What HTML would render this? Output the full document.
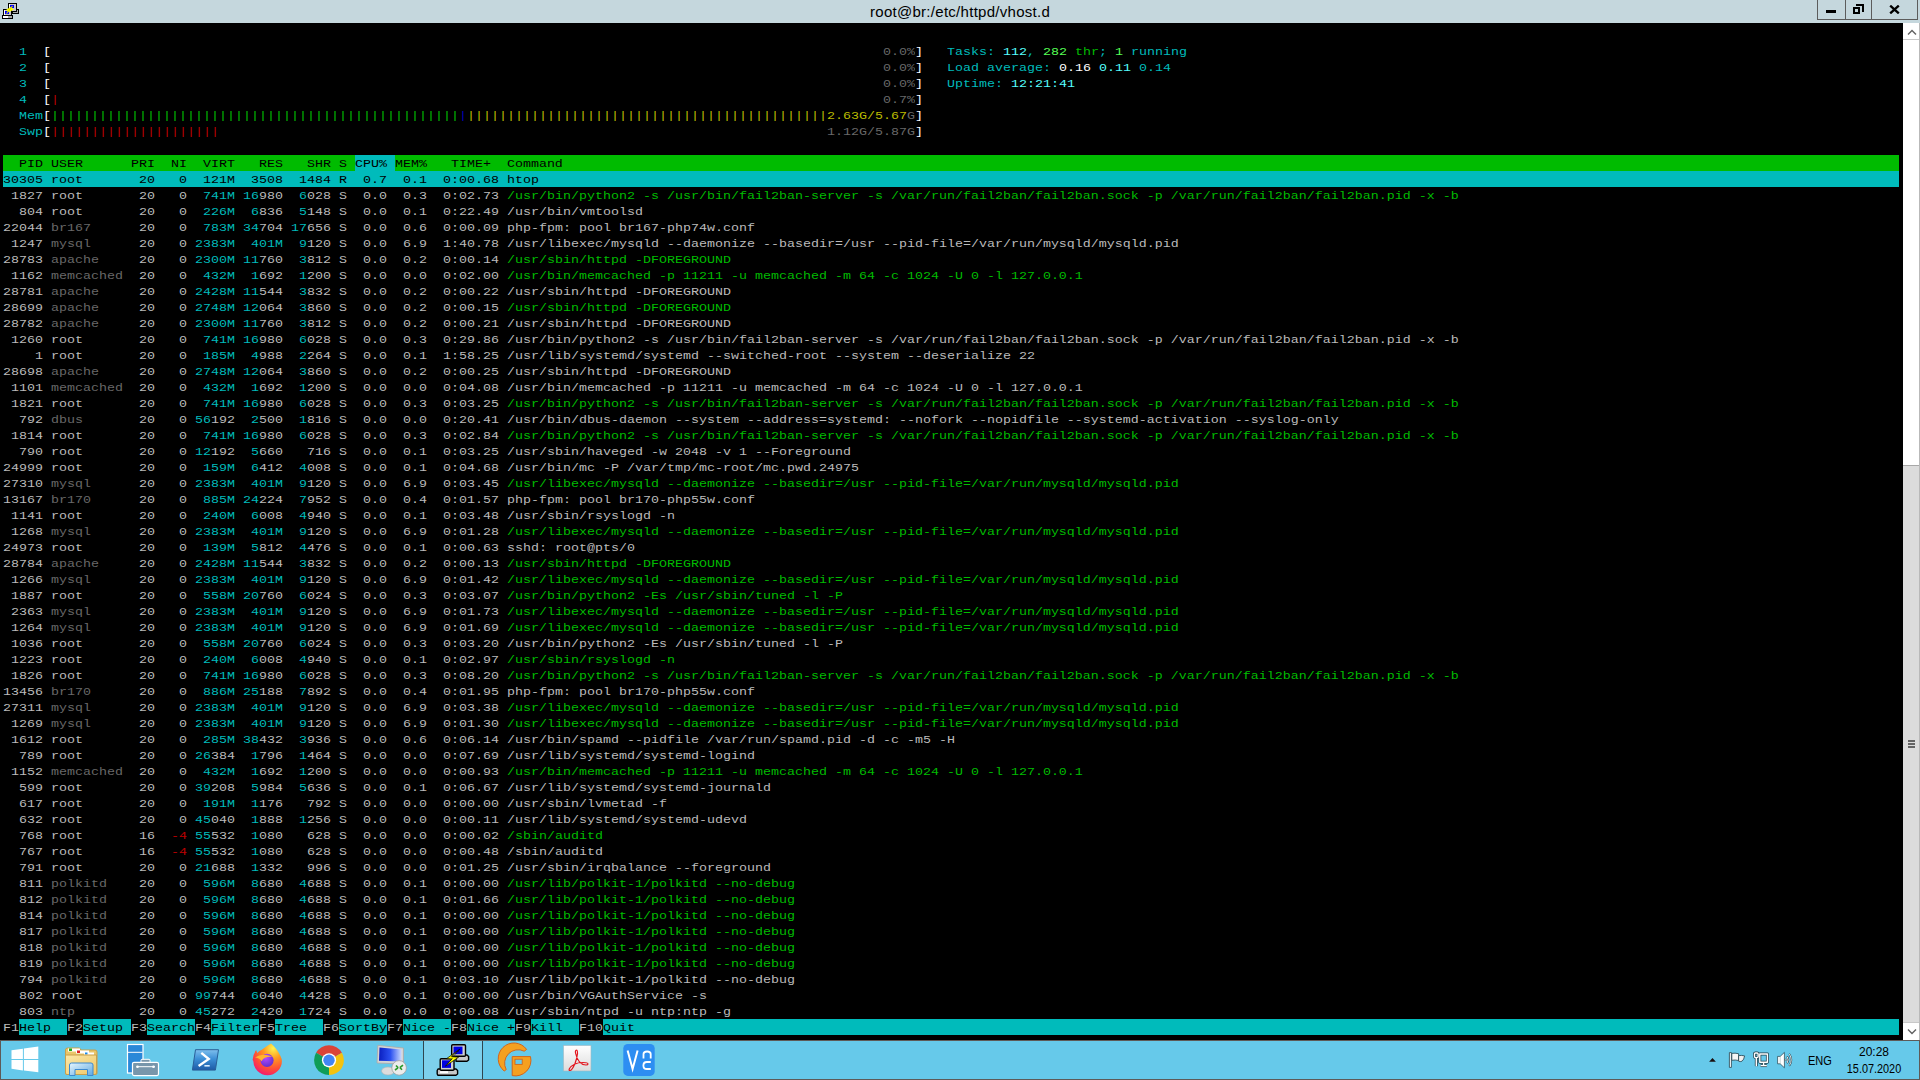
<!DOCTYPE html>
<html><head><meta charset="utf-8">
<style>
html,body{margin:0;padding:0;width:1920px;height:1080px;overflow:hidden;background:#000;}
body{position:relative;font-family:"Liberation Sans",sans-serif;}
#title{position:absolute;left:0;top:0;width:1920px;height:23px;background:#c5d7dd;}
#title .t{position:absolute;left:870px;top:3px;font-size:15px;color:#000;white-space:pre;letter-spacing:0.28px;}
.wb{position:absolute;top:0;height:19px;border:1px solid #5c5c5c;border-top:none;box-sizing:content-box;background:#c5d7dd;}
#term{position:absolute;left:0;top:23px;width:1903px;height:1017px;background:#000;}
.bg{position:absolute;height:16px;}
.row{position:absolute;left:0;height:16px;width:1903px;font-family:"Liberation Mono",monospace;font-size:13.333px;line-height:16px;white-space:pre;}
.row span{position:absolute;top:1px;transform:scaleY(0.88);transform-origin:0 11px;}
#sb{position:absolute;left:1903px;top:23px;width:16px;height:1017px;background:#fff;border-right:1px solid #b9b9b9;}
#taskbar{position:absolute;left:0;top:1040px;width:1918px;height:38px;background:#66c9ea;border:1px solid #5e5a57;}
.ico{position:absolute;}
</style></head><body>
<div id="title">
  <svg class="ico" style="left:0;top:0" width="24" height="23" viewBox="0 0 24 23" shape-rendering="crispEdges">
    <rect x="12" y="9" width="6" height="4" fill="#a8a8a8" stroke="#000" stroke-width="1"/>
    <rect x="8.5" y="3.5" width="8" height="8" fill="#c8c8c8" stroke="#000" stroke-width="1"/>
    <rect x="9" y="4" width="1" height="7" fill="#fff"/>
    <rect x="10" y="5" width="4" height="3" fill="#0000ff"/>
    <rect x="2.5" y="15.5" width="10" height="3" fill="#a8a8a8" stroke="#000" stroke-width="1"/>
    <rect x="3" y="16" width="5" height="2" fill="#fff"/>
    <rect x="3.5" y="9.5" width="8" height="6" fill="#c8c8c8" stroke="#000" stroke-width="1"/>
    <rect x="4" y="10" width="1" height="5" fill="#fff"/>
    <rect x="5" y="11" width="4" height="3" fill="#0000ff"/>
    <polygon points="6,10 9,8 11,7 13,9 14,9.5 11,11 9,12 7,11" fill="#ffff00" shape-rendering="auto"/>
    <path d="M12.5 6 L6.5 13.5" stroke="#e0e000" stroke-width="1.2" shape-rendering="auto"/>
  </svg>
  <div class="t">root@br:/etc/httpd/vhost.d</div>
  <div style="position:absolute;left:1817px;top:0;width:99px;height:19px;border:1px solid #5c5c5c;border-top:none;"></div>
  <div style="position:absolute;left:1845px;top:0;width:1px;height:19px;background:#5c5c5c"></div>
  <div style="position:absolute;left:1871px;top:0;width:1px;height:19px;background:#5c5c5c"></div>
  <div style="position:absolute;left:1826px;top:10px;width:10px;height:3px;background:#000"></div>
  <div style="position:absolute;left:1853px;top:7px;width:3px;height:3px;border:2px solid #000"></div>
  <div style="position:absolute;left:1856px;top:4px;width:6px;height:6px;border-top:2px solid #000;border-right:2px solid #000"></div>
  <svg style="position:absolute;left:1889px;top:5px" width="11" height="9" viewBox="0 0 11 9"><path d="M1.2 0.6 L9.8 8.4 M9.8 0.6 L1.2 8.4" stroke="#000" stroke-width="2.3"/></svg>
</div>
<div id="term">
</div>
<div id="rows" style="position:absolute;left:0;top:0;">
<div class="bg" style="top:155px;left:3px;width:352px;background:#00bb00"></div>
<div class="bg" style="top:155px;left:355px;width:40px;background:#00bbbb"></div>
<div class="bg" style="top:155px;left:395px;width:1504px;background:#00bb00"></div>
<div class="bg" style="top:171px;left:3px;width:1896px;background:#00bbbb"></div>
<div class="bg" style="top:1019px;left:19px;width:48px;background:#00bbbb"></div>
<div class="bg" style="top:1019px;left:83px;width:48px;background:#00bbbb"></div>
<div class="bg" style="top:1019px;left:147px;width:48px;background:#00bbbb"></div>
<div class="bg" style="top:1019px;left:211px;width:48px;background:#00bbbb"></div>
<div class="bg" style="top:1019px;left:275px;width:48px;background:#00bbbb"></div>
<div class="bg" style="top:1019px;left:339px;width:48px;background:#00bbbb"></div>
<div class="bg" style="top:1019px;left:403px;width:48px;background:#00bbbb"></div>
<div class="bg" style="top:1019px;left:467px;width:48px;background:#00bbbb"></div>
<div class="bg" style="top:1019px;left:531px;width:48px;background:#00bbbb"></div>
<div class="bg" style="top:1019px;left:603px;width:1296px;background:#00bbbb"></div>
<div class="row" style="top:43px"><span style="left:19px;color:#00bbbb">1</span><span style="left:43px;color:#ffffff">[</span><span style="left:883px;color:#686868">0.0%</span><span style="left:915px;color:#ffffff">]</span><span style="left:947px;color:#00bbbb">Tasks: </span><span style="left:1003px;color:#55ffff">112</span><span style="left:1027px;color:#00bbbb">, </span><span style="left:1043px;color:#55ff55">282</span><span style="left:1067px;color:#00bb00"> thr</span><span style="left:1099px;color:#00bbbb">; </span><span style="left:1115px;color:#55ff55">1</span><span style="left:1123px;color:#00bbbb"> running</span></div>
<div class="row" style="top:59px"><span style="left:19px;color:#00bbbb">2</span><span style="left:43px;color:#ffffff">[</span><span style="left:883px;color:#686868">0.0%</span><span style="left:915px;color:#ffffff">]</span><span style="left:947px;color:#00bbbb">Load average: </span><span style="left:1059px;color:#ffffff">0.16 </span><span style="left:1099px;color:#55ffff">0.11 </span><span style="left:1139px;color:#00bbbb">0.14</span></div>
<div class="row" style="top:75px"><span style="left:19px;color:#00bbbb">3</span><span style="left:43px;color:#ffffff">[</span><span style="left:883px;color:#686868">0.0%</span><span style="left:915px;color:#ffffff">]</span><span style="left:947px;color:#00bbbb">Uptime: </span><span style="left:1011px;color:#55ffff">12:21:41</span></div>
<div class="row" style="top:91px"><span style="left:19px;color:#00bbbb">4</span><span style="left:43px;color:#ffffff">[</span><span style="left:51px;color:#bb0000">|</span><span style="left:883px;color:#686868">0.7%</span><span style="left:915px;color:#ffffff">]</span></div>
<div class="row" style="top:107px"><span style="left:19px;color:#00bbbb">Mem</span><span style="left:43px;color:#ffffff">[</span><span style="left:51px;color:#00bb00">|||||||||||||||||||||||||||||||||||||||||||||||||||</span><span style="left:459px;color:#0000bb">|</span><span style="left:467px;color:#bbbb00">|||||||||||||||||||||||||||||||||||||||||||||</span><span style="left:827px;color:#bbbb00">2.63G/5.67</span><span style="left:907px;color:#686868">G</span><span style="left:915px;color:#ffffff">]</span></div>
<div class="row" style="top:123px"><span style="left:19px;color:#00bbbb">Swp</span><span style="left:43px;color:#ffffff">[</span><span style="left:51px;color:#bb0000">|||||||||||||||||||||</span><span style="left:827px;color:#686868">1.12G/5.87G</span><span style="left:915px;color:#ffffff">]</span></div>
<div class="row" style="top:155px"><span style="left:3px;color:#000000">  PID USER      PRI  NI  VIRT   RES   SHR S CPU% MEM%   TIME+  Command</span></div>
<div class="row" style="top:171px"><span style="left:3px;color:#000000">30305 </span><span style="left:51px;color:#000000">root      </span><span style="left:131px;color:#000000"> 20 </span><span style="left:163px;color:#000000">  0 </span><span style="left:195px;color:#000000"> 121M </span><span style="left:243px;color:#000000"> 3</span><span style="left:259px;color:#000000">508 </span><span style="left:291px;color:#000000"> 1</span><span style="left:307px;color:#000000">484 </span><span style="left:339px;color:#000000">R </span><span style="left:355px;color:#000000"> 0.7 </span><span style="left:395px;color:#000000"> 0.1 </span><span style="left:435px;color:#000000"> 0:00.68 </span><span style="left:507px;color:#000000">htop</span></div>
<div class="row" style="top:187px"><span style="left:3px;color:#bbbbbb"> 1827 </span><span style="left:51px;color:#bbbbbb">root      </span><span style="left:131px;color:#bbbbbb"> 20 </span><span style="left:163px;color:#bbbbbb">  0 </span><span style="left:195px;color:#00bbbb"> 741M </span><span style="left:243px;color:#00bbbb">16</span><span style="left:259px;color:#bbbbbb">980 </span><span style="left:291px;color:#00bbbb"> 6</span><span style="left:307px;color:#bbbbbb">028 </span><span style="left:339px;color:#bbbbbb">S </span><span style="left:355px;color:#bbbbbb"> 0.0 </span><span style="left:395px;color:#bbbbbb"> 0.3 </span><span style="left:435px;color:#bbbbbb"> 0:02.73 </span><span style="left:507px;color:#00bb00">/usr/bin/python2 -s /usr/bin/fail2ban-server -s /var/run/fail2ban/fail2ban.sock -p /var/run/fail2ban/fail2ban.pid -x -b</span></div>
<div class="row" style="top:203px"><span style="left:3px;color:#bbbbbb">  804 </span><span style="left:51px;color:#bbbbbb">root      </span><span style="left:131px;color:#bbbbbb"> 20 </span><span style="left:163px;color:#bbbbbb">  0 </span><span style="left:195px;color:#00bbbb"> 226M </span><span style="left:243px;color:#00bbbb"> 6</span><span style="left:259px;color:#bbbbbb">836 </span><span style="left:291px;color:#00bbbb"> 5</span><span style="left:307px;color:#bbbbbb">148 </span><span style="left:339px;color:#bbbbbb">S </span><span style="left:355px;color:#bbbbbb"> 0.0 </span><span style="left:395px;color:#bbbbbb"> 0.1 </span><span style="left:435px;color:#bbbbbb"> 0:22.49 </span><span style="left:507px;color:#bbbbbb">/usr/bin/vmtoolsd</span></div>
<div class="row" style="top:219px"><span style="left:3px;color:#bbbbbb">22044 </span><span style="left:51px;color:#686868">br167     </span><span style="left:131px;color:#bbbbbb"> 20 </span><span style="left:163px;color:#bbbbbb">  0 </span><span style="left:195px;color:#00bbbb"> 783M </span><span style="left:243px;color:#00bbbb">34</span><span style="left:259px;color:#bbbbbb">704 </span><span style="left:291px;color:#00bbbb">17</span><span style="left:307px;color:#bbbbbb">656 </span><span style="left:339px;color:#bbbbbb">S </span><span style="left:355px;color:#bbbbbb"> 0.0 </span><span style="left:395px;color:#bbbbbb"> 0.6 </span><span style="left:435px;color:#bbbbbb"> 0:00.09 </span><span style="left:507px;color:#bbbbbb">php-fpm: pool br167-php74w.conf</span></div>
<div class="row" style="top:235px"><span style="left:3px;color:#bbbbbb"> 1247 </span><span style="left:51px;color:#686868">mysql     </span><span style="left:131px;color:#bbbbbb"> 20 </span><span style="left:163px;color:#bbbbbb">  0 </span><span style="left:195px;color:#00bbbb">2383M </span><span style="left:243px;color:#00bbbb"> 401M </span><span style="left:291px;color:#00bbbb"> 9</span><span style="left:307px;color:#bbbbbb">120 </span><span style="left:339px;color:#bbbbbb">S </span><span style="left:355px;color:#bbbbbb"> 0.0 </span><span style="left:395px;color:#bbbbbb"> 6.9 </span><span style="left:435px;color:#bbbbbb"> 1:40.78 </span><span style="left:507px;color:#bbbbbb">/usr/libexec/mysqld --daemonize --basedir=/usr --pid-file=/var/run/mysqld/mysqld.pid</span></div>
<div class="row" style="top:251px"><span style="left:3px;color:#bbbbbb">28783 </span><span style="left:51px;color:#686868">apache    </span><span style="left:131px;color:#bbbbbb"> 20 </span><span style="left:163px;color:#bbbbbb">  0 </span><span style="left:195px;color:#00bbbb">2300M </span><span style="left:243px;color:#00bbbb">11</span><span style="left:259px;color:#bbbbbb">760 </span><span style="left:291px;color:#00bbbb"> 3</span><span style="left:307px;color:#bbbbbb">812 </span><span style="left:339px;color:#bbbbbb">S </span><span style="left:355px;color:#bbbbbb"> 0.0 </span><span style="left:395px;color:#bbbbbb"> 0.2 </span><span style="left:435px;color:#bbbbbb"> 0:00.14 </span><span style="left:507px;color:#00bb00">/usr/sbin/httpd -DFOREGROUND</span></div>
<div class="row" style="top:267px"><span style="left:3px;color:#bbbbbb"> 1162 </span><span style="left:51px;color:#686868">memcached </span><span style="left:131px;color:#bbbbbb"> 20 </span><span style="left:163px;color:#bbbbbb">  0 </span><span style="left:195px;color:#00bbbb"> 432M </span><span style="left:243px;color:#00bbbb"> 1</span><span style="left:259px;color:#bbbbbb">692 </span><span style="left:291px;color:#00bbbb"> 1</span><span style="left:307px;color:#bbbbbb">200 </span><span style="left:339px;color:#bbbbbb">S </span><span style="left:355px;color:#bbbbbb"> 0.0 </span><span style="left:395px;color:#bbbbbb"> 0.0 </span><span style="left:435px;color:#bbbbbb"> 0:02.00 </span><span style="left:507px;color:#00bb00">/usr/bin/memcached -p 11211 -u memcached -m 64 -c 1024 -U 0 -l 127.0.0.1</span></div>
<div class="row" style="top:283px"><span style="left:3px;color:#bbbbbb">28781 </span><span style="left:51px;color:#686868">apache    </span><span style="left:131px;color:#bbbbbb"> 20 </span><span style="left:163px;color:#bbbbbb">  0 </span><span style="left:195px;color:#00bbbb">2428M </span><span style="left:243px;color:#00bbbb">11</span><span style="left:259px;color:#bbbbbb">544 </span><span style="left:291px;color:#00bbbb"> 3</span><span style="left:307px;color:#bbbbbb">832 </span><span style="left:339px;color:#bbbbbb">S </span><span style="left:355px;color:#bbbbbb"> 0.0 </span><span style="left:395px;color:#bbbbbb"> 0.2 </span><span style="left:435px;color:#bbbbbb"> 0:00.22 </span><span style="left:507px;color:#bbbbbb">/usr/sbin/httpd -DFOREGROUND</span></div>
<div class="row" style="top:299px"><span style="left:3px;color:#bbbbbb">28699 </span><span style="left:51px;color:#686868">apache    </span><span style="left:131px;color:#bbbbbb"> 20 </span><span style="left:163px;color:#bbbbbb">  0 </span><span style="left:195px;color:#00bbbb">2748M </span><span style="left:243px;color:#00bbbb">12</span><span style="left:259px;color:#bbbbbb">064 </span><span style="left:291px;color:#00bbbb"> 3</span><span style="left:307px;color:#bbbbbb">860 </span><span style="left:339px;color:#bbbbbb">S </span><span style="left:355px;color:#bbbbbb"> 0.0 </span><span style="left:395px;color:#bbbbbb"> 0.2 </span><span style="left:435px;color:#bbbbbb"> 0:00.15 </span><span style="left:507px;color:#00bb00">/usr/sbin/httpd -DFOREGROUND</span></div>
<div class="row" style="top:315px"><span style="left:3px;color:#bbbbbb">28782 </span><span style="left:51px;color:#686868">apache    </span><span style="left:131px;color:#bbbbbb"> 20 </span><span style="left:163px;color:#bbbbbb">  0 </span><span style="left:195px;color:#00bbbb">2300M </span><span style="left:243px;color:#00bbbb">11</span><span style="left:259px;color:#bbbbbb">760 </span><span style="left:291px;color:#00bbbb"> 3</span><span style="left:307px;color:#bbbbbb">812 </span><span style="left:339px;color:#bbbbbb">S </span><span style="left:355px;color:#bbbbbb"> 0.0 </span><span style="left:395px;color:#bbbbbb"> 0.2 </span><span style="left:435px;color:#bbbbbb"> 0:00.21 </span><span style="left:507px;color:#bbbbbb">/usr/sbin/httpd -DFOREGROUND</span></div>
<div class="row" style="top:331px"><span style="left:3px;color:#bbbbbb"> 1260 </span><span style="left:51px;color:#bbbbbb">root      </span><span style="left:131px;color:#bbbbbb"> 20 </span><span style="left:163px;color:#bbbbbb">  0 </span><span style="left:195px;color:#00bbbb"> 741M </span><span style="left:243px;color:#00bbbb">16</span><span style="left:259px;color:#bbbbbb">980 </span><span style="left:291px;color:#00bbbb"> 6</span><span style="left:307px;color:#bbbbbb">028 </span><span style="left:339px;color:#bbbbbb">S </span><span style="left:355px;color:#bbbbbb"> 0.0 </span><span style="left:395px;color:#bbbbbb"> 0.3 </span><span style="left:435px;color:#bbbbbb"> 0:29.86 </span><span style="left:507px;color:#bbbbbb">/usr/bin/python2 -s /usr/bin/fail2ban-server -s /var/run/fail2ban/fail2ban.sock -p /var/run/fail2ban/fail2ban.pid -x -b</span></div>
<div class="row" style="top:347px"><span style="left:3px;color:#bbbbbb">    1 </span><span style="left:51px;color:#bbbbbb">root      </span><span style="left:131px;color:#bbbbbb"> 20 </span><span style="left:163px;color:#bbbbbb">  0 </span><span style="left:195px;color:#00bbbb"> 185M </span><span style="left:243px;color:#00bbbb"> 4</span><span style="left:259px;color:#bbbbbb">988 </span><span style="left:291px;color:#00bbbb"> 2</span><span style="left:307px;color:#bbbbbb">264 </span><span style="left:339px;color:#bbbbbb">S </span><span style="left:355px;color:#bbbbbb"> 0.0 </span><span style="left:395px;color:#bbbbbb"> 0.1 </span><span style="left:435px;color:#bbbbbb"> 1:58.25 </span><span style="left:507px;color:#bbbbbb">/usr/lib/systemd/systemd --switched-root --system --deserialize 22</span></div>
<div class="row" style="top:363px"><span style="left:3px;color:#bbbbbb">28698 </span><span style="left:51px;color:#686868">apache    </span><span style="left:131px;color:#bbbbbb"> 20 </span><span style="left:163px;color:#bbbbbb">  0 </span><span style="left:195px;color:#00bbbb">2748M </span><span style="left:243px;color:#00bbbb">12</span><span style="left:259px;color:#bbbbbb">064 </span><span style="left:291px;color:#00bbbb"> 3</span><span style="left:307px;color:#bbbbbb">860 </span><span style="left:339px;color:#bbbbbb">S </span><span style="left:355px;color:#bbbbbb"> 0.0 </span><span style="left:395px;color:#bbbbbb"> 0.2 </span><span style="left:435px;color:#bbbbbb"> 0:00.25 </span><span style="left:507px;color:#bbbbbb">/usr/sbin/httpd -DFOREGROUND</span></div>
<div class="row" style="top:379px"><span style="left:3px;color:#bbbbbb"> 1101 </span><span style="left:51px;color:#686868">memcached </span><span style="left:131px;color:#bbbbbb"> 20 </span><span style="left:163px;color:#bbbbbb">  0 </span><span style="left:195px;color:#00bbbb"> 432M </span><span style="left:243px;color:#00bbbb"> 1</span><span style="left:259px;color:#bbbbbb">692 </span><span style="left:291px;color:#00bbbb"> 1</span><span style="left:307px;color:#bbbbbb">200 </span><span style="left:339px;color:#bbbbbb">S </span><span style="left:355px;color:#bbbbbb"> 0.0 </span><span style="left:395px;color:#bbbbbb"> 0.0 </span><span style="left:435px;color:#bbbbbb"> 0:04.08 </span><span style="left:507px;color:#bbbbbb">/usr/bin/memcached -p 11211 -u memcached -m 64 -c 1024 -U 0 -l 127.0.0.1</span></div>
<div class="row" style="top:395px"><span style="left:3px;color:#bbbbbb"> 1821 </span><span style="left:51px;color:#bbbbbb">root      </span><span style="left:131px;color:#bbbbbb"> 20 </span><span style="left:163px;color:#bbbbbb">  0 </span><span style="left:195px;color:#00bbbb"> 741M </span><span style="left:243px;color:#00bbbb">16</span><span style="left:259px;color:#bbbbbb">980 </span><span style="left:291px;color:#00bbbb"> 6</span><span style="left:307px;color:#bbbbbb">028 </span><span style="left:339px;color:#bbbbbb">S </span><span style="left:355px;color:#bbbbbb"> 0.0 </span><span style="left:395px;color:#bbbbbb"> 0.3 </span><span style="left:435px;color:#bbbbbb"> 0:03.25 </span><span style="left:507px;color:#00bb00">/usr/bin/python2 -s /usr/bin/fail2ban-server -s /var/run/fail2ban/fail2ban.sock -p /var/run/fail2ban/fail2ban.pid -x -b</span></div>
<div class="row" style="top:411px"><span style="left:3px;color:#bbbbbb">  792 </span><span style="left:51px;color:#686868">dbus      </span><span style="left:131px;color:#bbbbbb"> 20 </span><span style="left:163px;color:#bbbbbb">  0 </span><span style="left:195px;color:#00bbbb">56</span><span style="left:211px;color:#bbbbbb">192 </span><span style="left:243px;color:#00bbbb"> 2</span><span style="left:259px;color:#bbbbbb">500 </span><span style="left:291px;color:#00bbbb"> 1</span><span style="left:307px;color:#bbbbbb">816 </span><span style="left:339px;color:#bbbbbb">S </span><span style="left:355px;color:#bbbbbb"> 0.0 </span><span style="left:395px;color:#bbbbbb"> 0.0 </span><span style="left:435px;color:#bbbbbb"> 0:20.41 </span><span style="left:507px;color:#bbbbbb">/usr/bin/dbus-daemon --system --address=systemd: --nofork --nopidfile --systemd-activation --syslog-only</span></div>
<div class="row" style="top:427px"><span style="left:3px;color:#bbbbbb"> 1814 </span><span style="left:51px;color:#bbbbbb">root      </span><span style="left:131px;color:#bbbbbb"> 20 </span><span style="left:163px;color:#bbbbbb">  0 </span><span style="left:195px;color:#00bbbb"> 741M </span><span style="left:243px;color:#00bbbb">16</span><span style="left:259px;color:#bbbbbb">980 </span><span style="left:291px;color:#00bbbb"> 6</span><span style="left:307px;color:#bbbbbb">028 </span><span style="left:339px;color:#bbbbbb">S </span><span style="left:355px;color:#bbbbbb"> 0.0 </span><span style="left:395px;color:#bbbbbb"> 0.3 </span><span style="left:435px;color:#bbbbbb"> 0:02.84 </span><span style="left:507px;color:#00bb00">/usr/bin/python2 -s /usr/bin/fail2ban-server -s /var/run/fail2ban/fail2ban.sock -p /var/run/fail2ban/fail2ban.pid -x -b</span></div>
<div class="row" style="top:443px"><span style="left:3px;color:#bbbbbb">  790 </span><span style="left:51px;color:#bbbbbb">root      </span><span style="left:131px;color:#bbbbbb"> 20 </span><span style="left:163px;color:#bbbbbb">  0 </span><span style="left:195px;color:#00bbbb">12</span><span style="left:211px;color:#bbbbbb">192 </span><span style="left:243px;color:#00bbbb"> 5</span><span style="left:259px;color:#bbbbbb">660 </span><span style="left:291px;color:#bbbbbb">  716 </span><span style="left:339px;color:#bbbbbb">S </span><span style="left:355px;color:#bbbbbb"> 0.0 </span><span style="left:395px;color:#bbbbbb"> 0.1 </span><span style="left:435px;color:#bbbbbb"> 0:03.25 </span><span style="left:507px;color:#bbbbbb">/usr/sbin/haveged -w 2048 -v 1 --Foreground</span></div>
<div class="row" style="top:459px"><span style="left:3px;color:#bbbbbb">24999 </span><span style="left:51px;color:#bbbbbb">root      </span><span style="left:131px;color:#bbbbbb"> 20 </span><span style="left:163px;color:#bbbbbb">  0 </span><span style="left:195px;color:#00bbbb"> 159M </span><span style="left:243px;color:#00bbbb"> 6</span><span style="left:259px;color:#bbbbbb">412 </span><span style="left:291px;color:#00bbbb"> 4</span><span style="left:307px;color:#bbbbbb">008 </span><span style="left:339px;color:#bbbbbb">S </span><span style="left:355px;color:#bbbbbb"> 0.0 </span><span style="left:395px;color:#bbbbbb"> 0.1 </span><span style="left:435px;color:#bbbbbb"> 0:04.68 </span><span style="left:507px;color:#bbbbbb">/usr/bin/mc -P /var/tmp/mc-root/mc.pwd.24975</span></div>
<div class="row" style="top:475px"><span style="left:3px;color:#bbbbbb">27310 </span><span style="left:51px;color:#686868">mysql     </span><span style="left:131px;color:#bbbbbb"> 20 </span><span style="left:163px;color:#bbbbbb">  0 </span><span style="left:195px;color:#00bbbb">2383M </span><span style="left:243px;color:#00bbbb"> 401M </span><span style="left:291px;color:#00bbbb"> 9</span><span style="left:307px;color:#bbbbbb">120 </span><span style="left:339px;color:#bbbbbb">S </span><span style="left:355px;color:#bbbbbb"> 0.0 </span><span style="left:395px;color:#bbbbbb"> 6.9 </span><span style="left:435px;color:#bbbbbb"> 0:03.45 </span><span style="left:507px;color:#00bb00">/usr/libexec/mysqld --daemonize --basedir=/usr --pid-file=/var/run/mysqld/mysqld.pid</span></div>
<div class="row" style="top:491px"><span style="left:3px;color:#bbbbbb">13167 </span><span style="left:51px;color:#686868">br170     </span><span style="left:131px;color:#bbbbbb"> 20 </span><span style="left:163px;color:#bbbbbb">  0 </span><span style="left:195px;color:#00bbbb"> 885M </span><span style="left:243px;color:#00bbbb">24</span><span style="left:259px;color:#bbbbbb">224 </span><span style="left:291px;color:#00bbbb"> 7</span><span style="left:307px;color:#bbbbbb">952 </span><span style="left:339px;color:#bbbbbb">S </span><span style="left:355px;color:#bbbbbb"> 0.0 </span><span style="left:395px;color:#bbbbbb"> 0.4 </span><span style="left:435px;color:#bbbbbb"> 0:01.57 </span><span style="left:507px;color:#bbbbbb">php-fpm: pool br170-php55w.conf</span></div>
<div class="row" style="top:507px"><span style="left:3px;color:#bbbbbb"> 1141 </span><span style="left:51px;color:#bbbbbb">root      </span><span style="left:131px;color:#bbbbbb"> 20 </span><span style="left:163px;color:#bbbbbb">  0 </span><span style="left:195px;color:#00bbbb"> 240M </span><span style="left:243px;color:#00bbbb"> 6</span><span style="left:259px;color:#bbbbbb">008 </span><span style="left:291px;color:#00bbbb"> 4</span><span style="left:307px;color:#bbbbbb">940 </span><span style="left:339px;color:#bbbbbb">S </span><span style="left:355px;color:#bbbbbb"> 0.0 </span><span style="left:395px;color:#bbbbbb"> 0.1 </span><span style="left:435px;color:#bbbbbb"> 0:03.48 </span><span style="left:507px;color:#bbbbbb">/usr/sbin/rsyslogd -n</span></div>
<div class="row" style="top:523px"><span style="left:3px;color:#bbbbbb"> 1268 </span><span style="left:51px;color:#686868">mysql     </span><span style="left:131px;color:#bbbbbb"> 20 </span><span style="left:163px;color:#bbbbbb">  0 </span><span style="left:195px;color:#00bbbb">2383M </span><span style="left:243px;color:#00bbbb"> 401M </span><span style="left:291px;color:#00bbbb"> 9</span><span style="left:307px;color:#bbbbbb">120 </span><span style="left:339px;color:#bbbbbb">S </span><span style="left:355px;color:#bbbbbb"> 0.0 </span><span style="left:395px;color:#bbbbbb"> 6.9 </span><span style="left:435px;color:#bbbbbb"> 0:01.28 </span><span style="left:507px;color:#00bb00">/usr/libexec/mysqld --daemonize --basedir=/usr --pid-file=/var/run/mysqld/mysqld.pid</span></div>
<div class="row" style="top:539px"><span style="left:3px;color:#bbbbbb">24973 </span><span style="left:51px;color:#bbbbbb">root      </span><span style="left:131px;color:#bbbbbb"> 20 </span><span style="left:163px;color:#bbbbbb">  0 </span><span style="left:195px;color:#00bbbb"> 139M </span><span style="left:243px;color:#00bbbb"> 5</span><span style="left:259px;color:#bbbbbb">812 </span><span style="left:291px;color:#00bbbb"> 4</span><span style="left:307px;color:#bbbbbb">476 </span><span style="left:339px;color:#bbbbbb">S </span><span style="left:355px;color:#bbbbbb"> 0.0 </span><span style="left:395px;color:#bbbbbb"> 0.1 </span><span style="left:435px;color:#bbbbbb"> 0:00.63 </span><span style="left:507px;color:#bbbbbb">sshd: root@pts/0</span></div>
<div class="row" style="top:555px"><span style="left:3px;color:#bbbbbb">28784 </span><span style="left:51px;color:#686868">apache    </span><span style="left:131px;color:#bbbbbb"> 20 </span><span style="left:163px;color:#bbbbbb">  0 </span><span style="left:195px;color:#00bbbb">2428M </span><span style="left:243px;color:#00bbbb">11</span><span style="left:259px;color:#bbbbbb">544 </span><span style="left:291px;color:#00bbbb"> 3</span><span style="left:307px;color:#bbbbbb">832 </span><span style="left:339px;color:#bbbbbb">S </span><span style="left:355px;color:#bbbbbb"> 0.0 </span><span style="left:395px;color:#bbbbbb"> 0.2 </span><span style="left:435px;color:#bbbbbb"> 0:00.13 </span><span style="left:507px;color:#00bb00">/usr/sbin/httpd -DFOREGROUND</span></div>
<div class="row" style="top:571px"><span style="left:3px;color:#bbbbbb"> 1266 </span><span style="left:51px;color:#686868">mysql     </span><span style="left:131px;color:#bbbbbb"> 20 </span><span style="left:163px;color:#bbbbbb">  0 </span><span style="left:195px;color:#00bbbb">2383M </span><span style="left:243px;color:#00bbbb"> 401M </span><span style="left:291px;color:#00bbbb"> 9</span><span style="left:307px;color:#bbbbbb">120 </span><span style="left:339px;color:#bbbbbb">S </span><span style="left:355px;color:#bbbbbb"> 0.0 </span><span style="left:395px;color:#bbbbbb"> 6.9 </span><span style="left:435px;color:#bbbbbb"> 0:01.42 </span><span style="left:507px;color:#00bb00">/usr/libexec/mysqld --daemonize --basedir=/usr --pid-file=/var/run/mysqld/mysqld.pid</span></div>
<div class="row" style="top:587px"><span style="left:3px;color:#bbbbbb"> 1887 </span><span style="left:51px;color:#bbbbbb">root      </span><span style="left:131px;color:#bbbbbb"> 20 </span><span style="left:163px;color:#bbbbbb">  0 </span><span style="left:195px;color:#00bbbb"> 558M </span><span style="left:243px;color:#00bbbb">20</span><span style="left:259px;color:#bbbbbb">760 </span><span style="left:291px;color:#00bbbb"> 6</span><span style="left:307px;color:#bbbbbb">024 </span><span style="left:339px;color:#bbbbbb">S </span><span style="left:355px;color:#bbbbbb"> 0.0 </span><span style="left:395px;color:#bbbbbb"> 0.3 </span><span style="left:435px;color:#bbbbbb"> 0:03.07 </span><span style="left:507px;color:#00bb00">/usr/bin/python2 -Es /usr/sbin/tuned -l -P</span></div>
<div class="row" style="top:603px"><span style="left:3px;color:#bbbbbb"> 2363 </span><span style="left:51px;color:#686868">mysql     </span><span style="left:131px;color:#bbbbbb"> 20 </span><span style="left:163px;color:#bbbbbb">  0 </span><span style="left:195px;color:#00bbbb">2383M </span><span style="left:243px;color:#00bbbb"> 401M </span><span style="left:291px;color:#00bbbb"> 9</span><span style="left:307px;color:#bbbbbb">120 </span><span style="left:339px;color:#bbbbbb">S </span><span style="left:355px;color:#bbbbbb"> 0.0 </span><span style="left:395px;color:#bbbbbb"> 6.9 </span><span style="left:435px;color:#bbbbbb"> 0:01.73 </span><span style="left:507px;color:#00bb00">/usr/libexec/mysqld --daemonize --basedir=/usr --pid-file=/var/run/mysqld/mysqld.pid</span></div>
<div class="row" style="top:619px"><span style="left:3px;color:#bbbbbb"> 1264 </span><span style="left:51px;color:#686868">mysql     </span><span style="left:131px;color:#bbbbbb"> 20 </span><span style="left:163px;color:#bbbbbb">  0 </span><span style="left:195px;color:#00bbbb">2383M </span><span style="left:243px;color:#00bbbb"> 401M </span><span style="left:291px;color:#00bbbb"> 9</span><span style="left:307px;color:#bbbbbb">120 </span><span style="left:339px;color:#bbbbbb">S </span><span style="left:355px;color:#bbbbbb"> 0.0 </span><span style="left:395px;color:#bbbbbb"> 6.9 </span><span style="left:435px;color:#bbbbbb"> 0:01.69 </span><span style="left:507px;color:#00bb00">/usr/libexec/mysqld --daemonize --basedir=/usr --pid-file=/var/run/mysqld/mysqld.pid</span></div>
<div class="row" style="top:635px"><span style="left:3px;color:#bbbbbb"> 1036 </span><span style="left:51px;color:#bbbbbb">root      </span><span style="left:131px;color:#bbbbbb"> 20 </span><span style="left:163px;color:#bbbbbb">  0 </span><span style="left:195px;color:#00bbbb"> 558M </span><span style="left:243px;color:#00bbbb">20</span><span style="left:259px;color:#bbbbbb">760 </span><span style="left:291px;color:#00bbbb"> 6</span><span style="left:307px;color:#bbbbbb">024 </span><span style="left:339px;color:#bbbbbb">S </span><span style="left:355px;color:#bbbbbb"> 0.0 </span><span style="left:395px;color:#bbbbbb"> 0.3 </span><span style="left:435px;color:#bbbbbb"> 0:03.20 </span><span style="left:507px;color:#bbbbbb">/usr/bin/python2 -Es /usr/sbin/tuned -l -P</span></div>
<div class="row" style="top:651px"><span style="left:3px;color:#bbbbbb"> 1223 </span><span style="left:51px;color:#bbbbbb">root      </span><span style="left:131px;color:#bbbbbb"> 20 </span><span style="left:163px;color:#bbbbbb">  0 </span><span style="left:195px;color:#00bbbb"> 240M </span><span style="left:243px;color:#00bbbb"> 6</span><span style="left:259px;color:#bbbbbb">008 </span><span style="left:291px;color:#00bbbb"> 4</span><span style="left:307px;color:#bbbbbb">940 </span><span style="left:339px;color:#bbbbbb">S </span><span style="left:355px;color:#bbbbbb"> 0.0 </span><span style="left:395px;color:#bbbbbb"> 0.1 </span><span style="left:435px;color:#bbbbbb"> 0:02.97 </span><span style="left:507px;color:#00bb00">/usr/sbin/rsyslogd -n</span></div>
<div class="row" style="top:667px"><span style="left:3px;color:#bbbbbb"> 1826 </span><span style="left:51px;color:#bbbbbb">root      </span><span style="left:131px;color:#bbbbbb"> 20 </span><span style="left:163px;color:#bbbbbb">  0 </span><span style="left:195px;color:#00bbbb"> 741M </span><span style="left:243px;color:#00bbbb">16</span><span style="left:259px;color:#bbbbbb">980 </span><span style="left:291px;color:#00bbbb"> 6</span><span style="left:307px;color:#bbbbbb">028 </span><span style="left:339px;color:#bbbbbb">S </span><span style="left:355px;color:#bbbbbb"> 0.0 </span><span style="left:395px;color:#bbbbbb"> 0.3 </span><span style="left:435px;color:#bbbbbb"> 0:08.20 </span><span style="left:507px;color:#00bb00">/usr/bin/python2 -s /usr/bin/fail2ban-server -s /var/run/fail2ban/fail2ban.sock -p /var/run/fail2ban/fail2ban.pid -x -b</span></div>
<div class="row" style="top:683px"><span style="left:3px;color:#bbbbbb">13456 </span><span style="left:51px;color:#686868">br170     </span><span style="left:131px;color:#bbbbbb"> 20 </span><span style="left:163px;color:#bbbbbb">  0 </span><span style="left:195px;color:#00bbbb"> 886M </span><span style="left:243px;color:#00bbbb">25</span><span style="left:259px;color:#bbbbbb">188 </span><span style="left:291px;color:#00bbbb"> 7</span><span style="left:307px;color:#bbbbbb">892 </span><span style="left:339px;color:#bbbbbb">S </span><span style="left:355px;color:#bbbbbb"> 0.0 </span><span style="left:395px;color:#bbbbbb"> 0.4 </span><span style="left:435px;color:#bbbbbb"> 0:01.95 </span><span style="left:507px;color:#bbbbbb">php-fpm: pool br170-php55w.conf</span></div>
<div class="row" style="top:699px"><span style="left:3px;color:#bbbbbb">27311 </span><span style="left:51px;color:#686868">mysql     </span><span style="left:131px;color:#bbbbbb"> 20 </span><span style="left:163px;color:#bbbbbb">  0 </span><span style="left:195px;color:#00bbbb">2383M </span><span style="left:243px;color:#00bbbb"> 401M </span><span style="left:291px;color:#00bbbb"> 9</span><span style="left:307px;color:#bbbbbb">120 </span><span style="left:339px;color:#bbbbbb">S </span><span style="left:355px;color:#bbbbbb"> 0.0 </span><span style="left:395px;color:#bbbbbb"> 6.9 </span><span style="left:435px;color:#bbbbbb"> 0:03.38 </span><span style="left:507px;color:#00bb00">/usr/libexec/mysqld --daemonize --basedir=/usr --pid-file=/var/run/mysqld/mysqld.pid</span></div>
<div class="row" style="top:715px"><span style="left:3px;color:#bbbbbb"> 1269 </span><span style="left:51px;color:#686868">mysql     </span><span style="left:131px;color:#bbbbbb"> 20 </span><span style="left:163px;color:#bbbbbb">  0 </span><span style="left:195px;color:#00bbbb">2383M </span><span style="left:243px;color:#00bbbb"> 401M </span><span style="left:291px;color:#00bbbb"> 9</span><span style="left:307px;color:#bbbbbb">120 </span><span style="left:339px;color:#bbbbbb">S </span><span style="left:355px;color:#bbbbbb"> 0.0 </span><span style="left:395px;color:#bbbbbb"> 6.9 </span><span style="left:435px;color:#bbbbbb"> 0:01.30 </span><span style="left:507px;color:#00bb00">/usr/libexec/mysqld --daemonize --basedir=/usr --pid-file=/var/run/mysqld/mysqld.pid</span></div>
<div class="row" style="top:731px"><span style="left:3px;color:#bbbbbb"> 1612 </span><span style="left:51px;color:#bbbbbb">root      </span><span style="left:131px;color:#bbbbbb"> 20 </span><span style="left:163px;color:#bbbbbb">  0 </span><span style="left:195px;color:#00bbbb"> 285M </span><span style="left:243px;color:#00bbbb">38</span><span style="left:259px;color:#bbbbbb">432 </span><span style="left:291px;color:#00bbbb"> 3</span><span style="left:307px;color:#bbbbbb">936 </span><span style="left:339px;color:#bbbbbb">S </span><span style="left:355px;color:#bbbbbb"> 0.0 </span><span style="left:395px;color:#bbbbbb"> 0.6 </span><span style="left:435px;color:#bbbbbb"> 0:06.14 </span><span style="left:507px;color:#bbbbbb">/usr/bin/spamd --pidfile /var/run/spamd.pid -d -c -m5 -H</span></div>
<div class="row" style="top:747px"><span style="left:3px;color:#bbbbbb">  789 </span><span style="left:51px;color:#bbbbbb">root      </span><span style="left:131px;color:#bbbbbb"> 20 </span><span style="left:163px;color:#bbbbbb">  0 </span><span style="left:195px;color:#00bbbb">26</span><span style="left:211px;color:#bbbbbb">384 </span><span style="left:243px;color:#00bbbb"> 1</span><span style="left:259px;color:#bbbbbb">796 </span><span style="left:291px;color:#00bbbb"> 1</span><span style="left:307px;color:#bbbbbb">464 </span><span style="left:339px;color:#bbbbbb">S </span><span style="left:355px;color:#bbbbbb"> 0.0 </span><span style="left:395px;color:#bbbbbb"> 0.0 </span><span style="left:435px;color:#bbbbbb"> 0:07.69 </span><span style="left:507px;color:#bbbbbb">/usr/lib/systemd/systemd-logind</span></div>
<div class="row" style="top:763px"><span style="left:3px;color:#bbbbbb"> 1152 </span><span style="left:51px;color:#686868">memcached </span><span style="left:131px;color:#bbbbbb"> 20 </span><span style="left:163px;color:#bbbbbb">  0 </span><span style="left:195px;color:#00bbbb"> 432M </span><span style="left:243px;color:#00bbbb"> 1</span><span style="left:259px;color:#bbbbbb">692 </span><span style="left:291px;color:#00bbbb"> 1</span><span style="left:307px;color:#bbbbbb">200 </span><span style="left:339px;color:#bbbbbb">S </span><span style="left:355px;color:#bbbbbb"> 0.0 </span><span style="left:395px;color:#bbbbbb"> 0.0 </span><span style="left:435px;color:#bbbbbb"> 0:00.93 </span><span style="left:507px;color:#00bb00">/usr/bin/memcached -p 11211 -u memcached -m 64 -c 1024 -U 0 -l 127.0.0.1</span></div>
<div class="row" style="top:779px"><span style="left:3px;color:#bbbbbb">  599 </span><span style="left:51px;color:#bbbbbb">root      </span><span style="left:131px;color:#bbbbbb"> 20 </span><span style="left:163px;color:#bbbbbb">  0 </span><span style="left:195px;color:#00bbbb">39</span><span style="left:211px;color:#bbbbbb">208 </span><span style="left:243px;color:#00bbbb"> 5</span><span style="left:259px;color:#bbbbbb">984 </span><span style="left:291px;color:#00bbbb"> 5</span><span style="left:307px;color:#bbbbbb">636 </span><span style="left:339px;color:#bbbbbb">S </span><span style="left:355px;color:#bbbbbb"> 0.0 </span><span style="left:395px;color:#bbbbbb"> 0.1 </span><span style="left:435px;color:#bbbbbb"> 0:06.67 </span><span style="left:507px;color:#bbbbbb">/usr/lib/systemd/systemd-journald</span></div>
<div class="row" style="top:795px"><span style="left:3px;color:#bbbbbb">  617 </span><span style="left:51px;color:#bbbbbb">root      </span><span style="left:131px;color:#bbbbbb"> 20 </span><span style="left:163px;color:#bbbbbb">  0 </span><span style="left:195px;color:#00bbbb"> 191M </span><span style="left:243px;color:#00bbbb"> 1</span><span style="left:259px;color:#bbbbbb">176 </span><span style="left:291px;color:#bbbbbb">  792 </span><span style="left:339px;color:#bbbbbb">S </span><span style="left:355px;color:#bbbbbb"> 0.0 </span><span style="left:395px;color:#bbbbbb"> 0.0 </span><span style="left:435px;color:#bbbbbb"> 0:00.00 </span><span style="left:507px;color:#bbbbbb">/usr/sbin/lvmetad -f</span></div>
<div class="row" style="top:811px"><span style="left:3px;color:#bbbbbb">  632 </span><span style="left:51px;color:#bbbbbb">root      </span><span style="left:131px;color:#bbbbbb"> 20 </span><span style="left:163px;color:#bbbbbb">  0 </span><span style="left:195px;color:#00bbbb">45</span><span style="left:211px;color:#bbbbbb">040 </span><span style="left:243px;color:#00bbbb"> 1</span><span style="left:259px;color:#bbbbbb">888 </span><span style="left:291px;color:#00bbbb"> 1</span><span style="left:307px;color:#bbbbbb">256 </span><span style="left:339px;color:#bbbbbb">S </span><span style="left:355px;color:#bbbbbb"> 0.0 </span><span style="left:395px;color:#bbbbbb"> 0.0 </span><span style="left:435px;color:#bbbbbb"> 0:00.11 </span><span style="left:507px;color:#bbbbbb">/usr/lib/systemd/systemd-udevd</span></div>
<div class="row" style="top:827px"><span style="left:3px;color:#bbbbbb">  768 </span><span style="left:51px;color:#bbbbbb">root      </span><span style="left:131px;color:#bbbbbb"> 16 </span><span style="left:163px;color:#bb0000"> -4 </span><span style="left:195px;color:#00bbbb">55</span><span style="left:211px;color:#bbbbbb">532 </span><span style="left:243px;color:#00bbbb"> 1</span><span style="left:259px;color:#bbbbbb">080 </span><span style="left:291px;color:#bbbbbb">  628 </span><span style="left:339px;color:#bbbbbb">S </span><span style="left:355px;color:#bbbbbb"> 0.0 </span><span style="left:395px;color:#bbbbbb"> 0.0 </span><span style="left:435px;color:#bbbbbb"> 0:00.02 </span><span style="left:507px;color:#00bb00">/sbin/auditd</span></div>
<div class="row" style="top:843px"><span style="left:3px;color:#bbbbbb">  767 </span><span style="left:51px;color:#bbbbbb">root      </span><span style="left:131px;color:#bbbbbb"> 16 </span><span style="left:163px;color:#bb0000"> -4 </span><span style="left:195px;color:#00bbbb">55</span><span style="left:211px;color:#bbbbbb">532 </span><span style="left:243px;color:#00bbbb"> 1</span><span style="left:259px;color:#bbbbbb">080 </span><span style="left:291px;color:#bbbbbb">  628 </span><span style="left:339px;color:#bbbbbb">S </span><span style="left:355px;color:#bbbbbb"> 0.0 </span><span style="left:395px;color:#bbbbbb"> 0.0 </span><span style="left:435px;color:#bbbbbb"> 0:00.48 </span><span style="left:507px;color:#bbbbbb">/sbin/auditd</span></div>
<div class="row" style="top:859px"><span style="left:3px;color:#bbbbbb">  791 </span><span style="left:51px;color:#bbbbbb">root      </span><span style="left:131px;color:#bbbbbb"> 20 </span><span style="left:163px;color:#bbbbbb">  0 </span><span style="left:195px;color:#00bbbb">21</span><span style="left:211px;color:#bbbbbb">688 </span><span style="left:243px;color:#00bbbb"> 1</span><span style="left:259px;color:#bbbbbb">332 </span><span style="left:291px;color:#bbbbbb">  996 </span><span style="left:339px;color:#bbbbbb">S </span><span style="left:355px;color:#bbbbbb"> 0.0 </span><span style="left:395px;color:#bbbbbb"> 0.0 </span><span style="left:435px;color:#bbbbbb"> 0:01.25 </span><span style="left:507px;color:#bbbbbb">/usr/sbin/irqbalance --foreground</span></div>
<div class="row" style="top:875px"><span style="left:3px;color:#bbbbbb">  811 </span><span style="left:51px;color:#686868">polkitd   </span><span style="left:131px;color:#bbbbbb"> 20 </span><span style="left:163px;color:#bbbbbb">  0 </span><span style="left:195px;color:#00bbbb"> 596M </span><span style="left:243px;color:#00bbbb"> 8</span><span style="left:259px;color:#bbbbbb">680 </span><span style="left:291px;color:#00bbbb"> 4</span><span style="left:307px;color:#bbbbbb">688 </span><span style="left:339px;color:#bbbbbb">S </span><span style="left:355px;color:#bbbbbb"> 0.0 </span><span style="left:395px;color:#bbbbbb"> 0.1 </span><span style="left:435px;color:#bbbbbb"> 0:00.00 </span><span style="left:507px;color:#00bb00">/usr/lib/polkit-1/polkitd --no-debug</span></div>
<div class="row" style="top:891px"><span style="left:3px;color:#bbbbbb">  812 </span><span style="left:51px;color:#686868">polkitd   </span><span style="left:131px;color:#bbbbbb"> 20 </span><span style="left:163px;color:#bbbbbb">  0 </span><span style="left:195px;color:#00bbbb"> 596M </span><span style="left:243px;color:#00bbbb"> 8</span><span style="left:259px;color:#bbbbbb">680 </span><span style="left:291px;color:#00bbbb"> 4</span><span style="left:307px;color:#bbbbbb">688 </span><span style="left:339px;color:#bbbbbb">S </span><span style="left:355px;color:#bbbbbb"> 0.0 </span><span style="left:395px;color:#bbbbbb"> 0.1 </span><span style="left:435px;color:#bbbbbb"> 0:01.66 </span><span style="left:507px;color:#00bb00">/usr/lib/polkit-1/polkitd --no-debug</span></div>
<div class="row" style="top:907px"><span style="left:3px;color:#bbbbbb">  814 </span><span style="left:51px;color:#686868">polkitd   </span><span style="left:131px;color:#bbbbbb"> 20 </span><span style="left:163px;color:#bbbbbb">  0 </span><span style="left:195px;color:#00bbbb"> 596M </span><span style="left:243px;color:#00bbbb"> 8</span><span style="left:259px;color:#bbbbbb">680 </span><span style="left:291px;color:#00bbbb"> 4</span><span style="left:307px;color:#bbbbbb">688 </span><span style="left:339px;color:#bbbbbb">S </span><span style="left:355px;color:#bbbbbb"> 0.0 </span><span style="left:395px;color:#bbbbbb"> 0.1 </span><span style="left:435px;color:#bbbbbb"> 0:00.00 </span><span style="left:507px;color:#00bb00">/usr/lib/polkit-1/polkitd --no-debug</span></div>
<div class="row" style="top:923px"><span style="left:3px;color:#bbbbbb">  817 </span><span style="left:51px;color:#686868">polkitd   </span><span style="left:131px;color:#bbbbbb"> 20 </span><span style="left:163px;color:#bbbbbb">  0 </span><span style="left:195px;color:#00bbbb"> 596M </span><span style="left:243px;color:#00bbbb"> 8</span><span style="left:259px;color:#bbbbbb">680 </span><span style="left:291px;color:#00bbbb"> 4</span><span style="left:307px;color:#bbbbbb">688 </span><span style="left:339px;color:#bbbbbb">S </span><span style="left:355px;color:#bbbbbb"> 0.0 </span><span style="left:395px;color:#bbbbbb"> 0.1 </span><span style="left:435px;color:#bbbbbb"> 0:00.00 </span><span style="left:507px;color:#00bb00">/usr/lib/polkit-1/polkitd --no-debug</span></div>
<div class="row" style="top:939px"><span style="left:3px;color:#bbbbbb">  818 </span><span style="left:51px;color:#686868">polkitd   </span><span style="left:131px;color:#bbbbbb"> 20 </span><span style="left:163px;color:#bbbbbb">  0 </span><span style="left:195px;color:#00bbbb"> 596M </span><span style="left:243px;color:#00bbbb"> 8</span><span style="left:259px;color:#bbbbbb">680 </span><span style="left:291px;color:#00bbbb"> 4</span><span style="left:307px;color:#bbbbbb">688 </span><span style="left:339px;color:#bbbbbb">S </span><span style="left:355px;color:#bbbbbb"> 0.0 </span><span style="left:395px;color:#bbbbbb"> 0.1 </span><span style="left:435px;color:#bbbbbb"> 0:00.00 </span><span style="left:507px;color:#00bb00">/usr/lib/polkit-1/polkitd --no-debug</span></div>
<div class="row" style="top:955px"><span style="left:3px;color:#bbbbbb">  819 </span><span style="left:51px;color:#686868">polkitd   </span><span style="left:131px;color:#bbbbbb"> 20 </span><span style="left:163px;color:#bbbbbb">  0 </span><span style="left:195px;color:#00bbbb"> 596M </span><span style="left:243px;color:#00bbbb"> 8</span><span style="left:259px;color:#bbbbbb">680 </span><span style="left:291px;color:#00bbbb"> 4</span><span style="left:307px;color:#bbbbbb">688 </span><span style="left:339px;color:#bbbbbb">S </span><span style="left:355px;color:#bbbbbb"> 0.0 </span><span style="left:395px;color:#bbbbbb"> 0.1 </span><span style="left:435px;color:#bbbbbb"> 0:00.00 </span><span style="left:507px;color:#00bb00">/usr/lib/polkit-1/polkitd --no-debug</span></div>
<div class="row" style="top:971px"><span style="left:3px;color:#bbbbbb">  794 </span><span style="left:51px;color:#686868">polkitd   </span><span style="left:131px;color:#bbbbbb"> 20 </span><span style="left:163px;color:#bbbbbb">  0 </span><span style="left:195px;color:#00bbbb"> 596M </span><span style="left:243px;color:#00bbbb"> 8</span><span style="left:259px;color:#bbbbbb">680 </span><span style="left:291px;color:#00bbbb"> 4</span><span style="left:307px;color:#bbbbbb">688 </span><span style="left:339px;color:#bbbbbb">S </span><span style="left:355px;color:#bbbbbb"> 0.0 </span><span style="left:395px;color:#bbbbbb"> 0.1 </span><span style="left:435px;color:#bbbbbb"> 0:03.10 </span><span style="left:507px;color:#bbbbbb">/usr/lib/polkit-1/polkitd --no-debug</span></div>
<div class="row" style="top:987px"><span style="left:3px;color:#bbbbbb">  802 </span><span style="left:51px;color:#bbbbbb">root      </span><span style="left:131px;color:#bbbbbb"> 20 </span><span style="left:163px;color:#bbbbbb">  0 </span><span style="left:195px;color:#00bbbb">99</span><span style="left:211px;color:#bbbbbb">744 </span><span style="left:243px;color:#00bbbb"> 6</span><span style="left:259px;color:#bbbbbb">040 </span><span style="left:291px;color:#00bbbb"> 4</span><span style="left:307px;color:#bbbbbb">428 </span><span style="left:339px;color:#bbbbbb">S </span><span style="left:355px;color:#bbbbbb"> 0.0 </span><span style="left:395px;color:#bbbbbb"> 0.1 </span><span style="left:435px;color:#bbbbbb"> 0:00.00 </span><span style="left:507px;color:#bbbbbb">/usr/bin/VGAuthService -s</span></div>
<div class="row" style="top:1003px"><span style="left:3px;color:#bbbbbb">  803 </span><span style="left:51px;color:#686868">ntp       </span><span style="left:131px;color:#bbbbbb"> 20 </span><span style="left:163px;color:#bbbbbb">  0 </span><span style="left:195px;color:#00bbbb">45</span><span style="left:211px;color:#bbbbbb">272 </span><span style="left:243px;color:#00bbbb"> 2</span><span style="left:259px;color:#bbbbbb">420 </span><span style="left:291px;color:#00bbbb"> 1</span><span style="left:307px;color:#bbbbbb">724 </span><span style="left:339px;color:#bbbbbb">S </span><span style="left:355px;color:#bbbbbb"> 0.0 </span><span style="left:395px;color:#bbbbbb"> 0.0 </span><span style="left:435px;color:#bbbbbb"> 0:00.08 </span><span style="left:507px;color:#bbbbbb">/usr/sbin/ntpd -u ntp:ntp -g</span></div>
<div class="row" style="top:1019px"><span style="left:3px;color:#bbbbbb">F1</span><span style="left:19px;color:#000000">Help  </span><span style="left:67px;color:#bbbbbb">F2</span><span style="left:83px;color:#000000">Setup </span><span style="left:131px;color:#bbbbbb">F3</span><span style="left:147px;color:#000000">Search</span><span style="left:195px;color:#bbbbbb">F4</span><span style="left:211px;color:#000000">Filter</span><span style="left:259px;color:#bbbbbb">F5</span><span style="left:275px;color:#000000">Tree  </span><span style="left:323px;color:#bbbbbb">F6</span><span style="left:339px;color:#000000">SortBy</span><span style="left:387px;color:#bbbbbb">F7</span><span style="left:403px;color:#000000">Nice -</span><span style="left:451px;color:#bbbbbb">F8</span><span style="left:467px;color:#000000">Nice +</span><span style="left:515px;color:#bbbbbb">F9</span><span style="left:531px;color:#000000">Kill  </span><span style="left:579px;color:#bbbbbb">F10</span><span style="left:603px;color:#000000">Quit</span></div>
</div>
<div id="sb">
  <div style="position:absolute;left:0;top:0;width:16px;height:16px;border-bottom:1px solid #c8c8c8;background:#fff"></div>
  <svg style="position:absolute;left:4px;top:6px" width="10" height="6" viewBox="0 0 10 6"><path d="M1 5.5 L5 1.5 L9 5.5" stroke="#606060" stroke-width="1.4" fill="none"/></svg>
  <div style="position:absolute;left:0;top:442px;width:16px;height:557px;background:#dcdcdc;border-top:1px solid #a8a8a8;"></div>
  <div style="position:absolute;left:5px;top:717px;width:7px;height:2px;background:#646464"></div>
  <div style="position:absolute;left:5px;top:720px;width:7px;height:2px;background:#646464"></div>
  <div style="position:absolute;left:5px;top:723px;width:7px;height:2px;background:#646464"></div>
  <div style="position:absolute;left:0;top:999px;width:16px;height:1px;background:#c8c8c8"></div>
  <svg style="position:absolute;left:4px;top:1006px" width="10" height="6" viewBox="0 0 10 6"><path d="M1 0.5 L5 4.5 L9 0.5" stroke="#606060" stroke-width="1.4" fill="none"/></svg>
</div>
<div id="taskbar"></div>
<svg style="position:absolute;left:0;top:1040px" width="1920" height="40" viewBox="0 0 1920 40">
<defs>
<linearGradient id="psg" x1="0" y1="0" x2="0" y2="1"><stop offset="0" stop-color="#7fc0ee"/><stop offset="0.45" stop-color="#3c8fd6"/><stop offset="1" stop-color="#1d5aa6"/></linearGradient>
<radialGradient id="ffg" cx="0.7" cy="0.15" r="0.95"><stop offset="0" stop-color="#fff44f"/><stop offset="0.35" stop-color="#ff9a1f"/><stop offset="0.7" stop-color="#ff4a3a"/><stop offset="1" stop-color="#f0107a"/></radialGradient>
<radialGradient id="ffp" cx="0.4" cy="0.3" r="0.8"><stop offset="0" stop-color="#b64bff"/><stop offset="1" stop-color="#5b2bc8"/></radialGradient>
<linearGradient id="rdps" x1="0" y1="0" x2="1" y2="0"><stop offset="0" stop-color="#0a1fc0"/><stop offset="0.5" stop-color="#2a4ff0"/><stop offset="1" stop-color="#c8d8ff"/></linearGradient>
<linearGradient id="acr" x1="0" y1="0" x2="0" y2="1"><stop offset="0" stop-color="#ffffff"/><stop offset="1" stop-color="#dcdcdc"/></linearGradient>
<linearGradient id="fold" x1="0" y1="0" x2="1" y2="1"><stop offset="0" stop-color="#fbe7a8"/><stop offset="1" stop-color="#efc868"/></linearGradient>
<linearGradient id="stand" x1="0" y1="0" x2="1" y2="1"><stop offset="0" stop-color="#e6f6ff"/><stop offset="1" stop-color="#5fa8e0"/></linearGradient>
</defs>
<!-- windows logo -->
<g fill="#ffffff">
<polygon points="11.5,10.2 22.9,8.7 22.9,19.1 11.5,19.1"/>
<polygon points="23.9,8.6 38.3,6.6 38.3,19.1 23.9,19.1"/>
<polygon points="11.5,20.1 22.9,20.1 22.9,30.5 11.5,28.8"/>
<polygon points="23.9,20.1 38.3,20.1 38.3,32.3 23.9,30.6"/>
</g>
<!-- explorer -->
<path d="M65.5 10 q0 -2 2 -2 h12 l1.5 2 h14 q2 0 2 2 v21 q0 1.5 -1.5 1.5 h-28.5 q-1.5 0 -1.5 -1.5z" fill="#e9c66a" stroke="#c9a04a" stroke-width="1"/>
<rect x="68" y="8.5" width="12" height="3" fill="#ffffff"/><rect x="69" y="8.5" width="3" height="2.5" fill="#1aaa1a"/>
<rect x="76" y="10.5" width="13" height="3" fill="#ffffff"/><rect x="77" y="10.5" width="3" height="2.5" fill="#d22"/>
<rect x="84" y="12.5" width="10" height="2.5" fill="#ffffff"/><rect x="85" y="12.5" width="2.5" height="2" fill="#1a8ae8"/>
<path d="M65.5 15 h31 v18 q0 1.5 -1.5 1.5 h-28 q-1.5 0 -1.5 -1.5z" fill="url(#fold)" stroke="#c9a04a" stroke-width="1"/>
<path d="M69.5 25 q0 -2 2 -2 h19.5 q2 0 2 2 v10.5 h-5.5 v-6 h-12.5 v6 h-5.5z" fill="url(#stand)" stroke="#3c8ad0" stroke-width="1"/>
<!-- server manager -->
<rect x="127.5" y="4.5" width="15.5" height="28.5" fill="#2a88d8" stroke="#ffffff" stroke-width="1.2"/>
<line x1="128" y1="12.3" x2="142.5" y2="12.3" stroke="#ffffff" stroke-width="1"/>
<rect x="141" y="19.3" width="9" height="3.5" rx="1" fill="#7896ab" stroke="#ffffff" stroke-width="1"/>
<rect x="132.5" y="22.3" width="26" height="13.3" rx="1.5" fill="#7896ab" stroke="#ffffff" stroke-width="1.2"/>
<line x1="136.5" y1="26.7" x2="155" y2="26.7" stroke="#ffffff" stroke-width="1"/>
<circle cx="137.5" cy="26.7" r="1.3" fill="#fff"/><circle cx="153.5" cy="26.7" r="1.3" fill="#fff"/>
<!-- powershell -->
<polygon points="195.5,9.7 218.5,9.7 215.4,30.1 192.4,30.1" fill="url(#psg)" stroke="#2a5f98" stroke-width="1"/>
<polyline points="201.3,12.8 208.8,19 198.6,26" fill="none" stroke="#ffffff" stroke-width="2.3"/>
<line x1="204.4" y1="25.8" x2="209.7" y2="25.8" stroke="#d8ecff" stroke-width="1.6"/>
<!-- firefox -->
<path d="M252.6 20 q0.3 -5.5 3.5 -10 l1.2 3 q2 -2.5 4.5 -3.2 q3 -2.5 9.2 -6.3 q6 5 9.5 12.5 q1.4 3 1.4 5 a14.3 14.3 0 0 1 -28.6 0 z" fill="url(#ffg)"/>
<circle cx="267" cy="20.3" r="6.6" fill="url(#ffp)"/>
<path d="M255 17.6 q5 -3.5 11 -2.6 q4 0.6 6.5 2 q-4 -0.8 -7.5 0.8 q-2.5 1.2 -3.5 3.4 q-2.5 -3.4 -6.5 -3.6z" fill="#ffb52e"/>
<!-- chrome -->
<path d="M329 20.2 L316.1 12.75 A14.9 14.9 0 0 1 341.9 12.75 Z" fill="#db4437"/>
<path d="M329 20.2 L341.9 12.75 A14.9 14.9 0 0 1 329 35.1 Z" fill="#f4c20d"/>
<path d="M329 20.2 L329 35.1 A14.9 14.9 0 0 1 316.1 12.75 Z" fill="#0f9d58"/>
<circle cx="329" cy="20.3" r="7.1" fill="#ffffff"/>
<circle cx="329" cy="20.3" r="5.7" fill="#4285f4"/>
<!-- rdp -->
<polygon points="377.8,5.3 403.5,8 403.5,24 377,23" fill="#d4d4d4" stroke="#a8a8a8" stroke-width="0.8"/>
<polygon points="379.5,7.5 401.5,9.5 401.5,21.5 379,20.8" fill="url(#rdps)"/>
<ellipse cx="388" cy="31" rx="6.5" ry="4" fill="#dcdcdc" stroke="#b0b0b0" stroke-width="0.6"/>
<circle cx="399.1" cy="27.9" r="7.3" fill="#ececec" stroke="#a0a0a0" stroke-width="0.8"/>
<path d="M395 30 l3 -2.2 M396 25.5 l2.2 2.4 M403 25.2 l-3 2.3 M402 29.8 l-2.2 -2.3" stroke="#2a9a2a" stroke-width="1.6"/>
<!-- active putty button -->
<rect x="423" y="1" width="60" height="38" fill="#7dd0ec"/>
<line x1="423.5" y1="1" x2="423.5" y2="39" stroke="#2e4650" stroke-width="1"/>
<line x1="482.5" y1="1" x2="482.5" y2="39" stroke="#2e4650" stroke-width="1"/>
<!-- putty icon -->
<g stroke="#000" stroke-width="1.4" stroke-linejoin="round">
<path d="M456 15 h11 l1.6 1.5 v3.5 l-1.6 1.3 h-11z" fill="#c8c8c8"/>
<rect x="451.7" y="4.7" width="13.8" height="11.5" rx="1" fill="#d0d0d0"/>
<path d="M438 29 h18 l1.6 1.5 v3.5 l-1.6 1.3 h-18 l-0.8 -1.3 v-3.5z" fill="#c8c8c8"/>
<rect x="440.2" y="18.7" width="13.8" height="11.5" rx="1" fill="#d0d0d0"/>
</g>
<rect x="453.5" y="6.6" width="9" height="7.6" fill="#0000e0"/>
<rect x="442" y="20.3" width="9" height="7.6" fill="#0000e0"/>
<rect x="440" y="31.2" width="8" height="2" fill="#ffffff"/>
<polygon points="459.8,9.2 451.5,16.6 458.6,17.2 445.4,26.2 451.8,19.1 446.6,18.6" fill="#ffff00" stroke="#000" stroke-width="0.7" stroke-linejoin="round"/>
<line x1="458.5" y1="11" x2="447" y2="24.5" stroke="#000" stroke-width="0.6" stroke-dasharray="1.5 1.5"/>
<!-- orange icon -->
<path d="M504.2 31 A15.7 15.7 0 1 1 526.6 9.4 L524.2 11.2 A13.5 13.5 0 0 0 506.2 29.6 Z" fill="#f5a020" stroke="#d2661a" stroke-width="1"/>
<path d="M512.2 16.6 h18.3 A15.6 15.6 0 0 1 512.2 35.6 z" fill="#f5a020" stroke="#d2661a" stroke-width="1"/>
<rect x="515" y="19.2" width="7.2" height="5.2" fill="#66c9ea" stroke="#d2661a" stroke-width="0.9"/>
<!-- acrobat -->
<rect x="563.5" y="5.5" width="27.5" height="25.5" fill="url(#acr)" stroke="#9fb8c2" stroke-width="0.6"/>
<path d="M577 10 q-2 0 -1.5 3 q1 5 4 9 q3 3 6.5 3 q2 0 2 -1 q0 -1.5 -5 -1.5 q-5 0 -8 1.5 q-4 2 -5.5 4.5 q-1 2 0.5 2 q2 0 5 -7 q2 -5 2.5 -10 q0 -3.5 -1 -3.5z" fill="none" stroke="#e3161e" stroke-width="1.2"/>
<!-- vnc -->
<rect x="623.3" y="4" width="31.4" height="31.9" rx="4.5" fill="#2d8ef2"/>
<polyline points="627.6,10.4 632.6,29 637.6,10.4" fill="none" stroke="#ffffff" stroke-width="2"/>
<path d="M643.5 18.6 v-4.5 q0 -2.6 3.6 -2.6 q3.6 0 3.6 2.6 v4.5" fill="none" stroke="#ffffff" stroke-width="1.8"/>
<path d="M650.8 22 h-4 q-3.4 0 -3.4 3.4 q0 3.6 3.4 3.6 h4" fill="none" stroke="#ffffff" stroke-width="1.8"/>
<!-- tray -->
<polygon points="1709.1,21.8 1715.9,21.8 1712.5,18" fill="#1a1010"/>
<g stroke="#23404b" stroke-width="0.8" stroke-linejoin="round">
<rect x="1729.4" y="12.6" width="2" height="14.8" fill="#ffffff"/>
<path d="M1731.8 13.4 q3.2 -0.6 6.8 0.3 v6.8 q-3.4 -0.9 -6.8 -0.2z" fill="#f6f6f6"/>
<path d="M1738.6 15.6 q3 -0.5 6 0.3 q-0.6 3.8 -2.6 5.3 q-1.8 0.8 -3.4 0z" fill="#f0f0f0"/>
</g>
<g fill="none" stroke="#23404b" stroke-width="2.9" stroke-linejoin="round">
<rect x="1754.5" y="13" width="3.6" height="4.6" rx="1"/>
<line x1="1756.3" y1="17.6" x2="1756.3" y2="26.2"/>
<rect x="1759.8" y="14" width="7.6" height="8.2"/>
<line x1="1763.6" y1="22.2" x2="1763.6" y2="25.4"/>
<line x1="1760.6" y1="25.6" x2="1766.8" y2="25.6"/>
</g>
<g fill="none" stroke="#ffffff" stroke-width="1.4" stroke-linejoin="round">
<rect x="1754.5" y="13" width="3.6" height="4.6" rx="1"/>
<line x1="1756.3" y1="17.6" x2="1756.3" y2="26.2"/>
<rect x="1759.8" y="14" width="7.6" height="8.2"/>
<line x1="1763.6" y1="22.2" x2="1763.6" y2="25.4"/>
<line x1="1760.6" y1="25.6" x2="1766.8" y2="25.6"/>
</g>
<path d="M1777.6 16.4 h2.6 l4.2 -4 v15.4 l-4.2 -4 h-2.6z" fill="#ffffff" stroke="#23404b" stroke-width="0.7" stroke-linejoin="round"/>
<line x1="1780.2" y1="16.6" x2="1780.2" y2="23.6" stroke="#8aa" stroke-width="0.5"/>
<circle cx="1785.9" cy="19.8" r="0.9" fill="#fff" stroke="#23404b" stroke-width="0.5"/>
<g fill="none" stroke="#23404b" stroke-width="1.8" stroke-linecap="round">
<path d="M1787.4 17 q1.8 2.8 0 5.6"/>
<path d="M1789.6 14.4 q3.4 5.4 0 10.8"/>
</g>
<g fill="none" stroke="#ffffff" stroke-width="0.9" stroke-linecap="round">
<path d="M1787.4 17 q1.8 2.8 0 5.6"/>
<path d="M1789.6 14.4 q3.4 5.4 0 10.8"/>
</g>
</svg>
<div style="position:absolute;left:1808px;top:1054px;font-size:12.5px;line-height:14px;color:#000;white-space:pre;font-family:'Liberation Sans',sans-serif;transform:scaleX(0.88);transform-origin:0 0">ENG</div>
<div style="position:absolute;left:1834px;width:80px;text-align:center;top:1045px;font-size:12.5px;line-height:14px;color:#000;white-space:pre;font-family:'Liberation Sans',sans-serif;transform:scaleX(0.96);transform-origin:40px 0">20:28</div>
<div style="position:absolute;left:1834px;width:80px;text-align:center;top:1062px;font-size:12.5px;line-height:14px;color:#000;white-space:pre;font-family:'Liberation Sans',sans-serif;transform:scaleX(0.87);transform-origin:40px 0">15.07.2020</div>

</body></html>
